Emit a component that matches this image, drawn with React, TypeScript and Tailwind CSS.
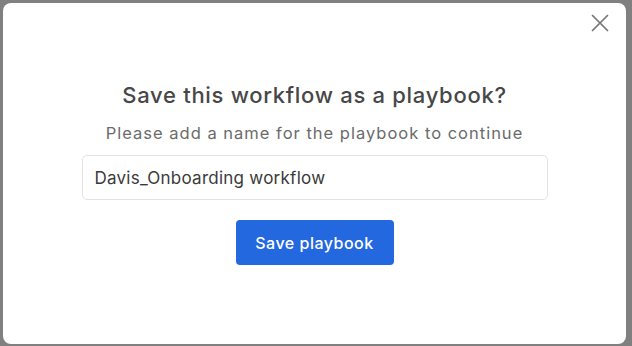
import { X } from "lucide-react";

export default function App() {
  return (
    <div
      className="h-[346px] w-[632px] bg-[#808080] pt-[3px] pl-[3px] pr-[6px] pb-[2px]"
      style={{ fontFamily: "Inter, 'Open Sans', sans-serif" }}
    >
      <div className="relative flex h-full w-full flex-col items-center rounded-[8px] bg-white pt-[78px]">
        <button className="absolute right-[11px] top-[5px] text-[#777]">
          <X size={30} strokeWidth={1.4} />
        </button>
        <h2 className="text-[22px] font-medium leading-[28px] tracking-[0.7px] text-[#474747]">
          Save this workflow as a playbook?
        </h2>
        <p className="mt-[13px] text-[16.5px] leading-[22px] tracking-[1px] text-[#6b6b6b]">
          Please add a name for the playbook to continue
        </p>
        <input
          defaultValue="Davis_Onboarding workflow"
          className="mt-[11px] h-[45px] w-[466px] rounded-[5px] border border-[#e3e3e3] px-[12px] text-[17px] tracking-[0.25px] text-[#3a3a3a] outline-none"
        />
        <button className="mt-[20px] h-[45px] w-[158px] rounded-[4px] bg-[#2468e0] text-[16px] font-medium tracking-[0.5px] text-white">
          Save playbook
        </button>
      </div>
    </div>
  );
}
